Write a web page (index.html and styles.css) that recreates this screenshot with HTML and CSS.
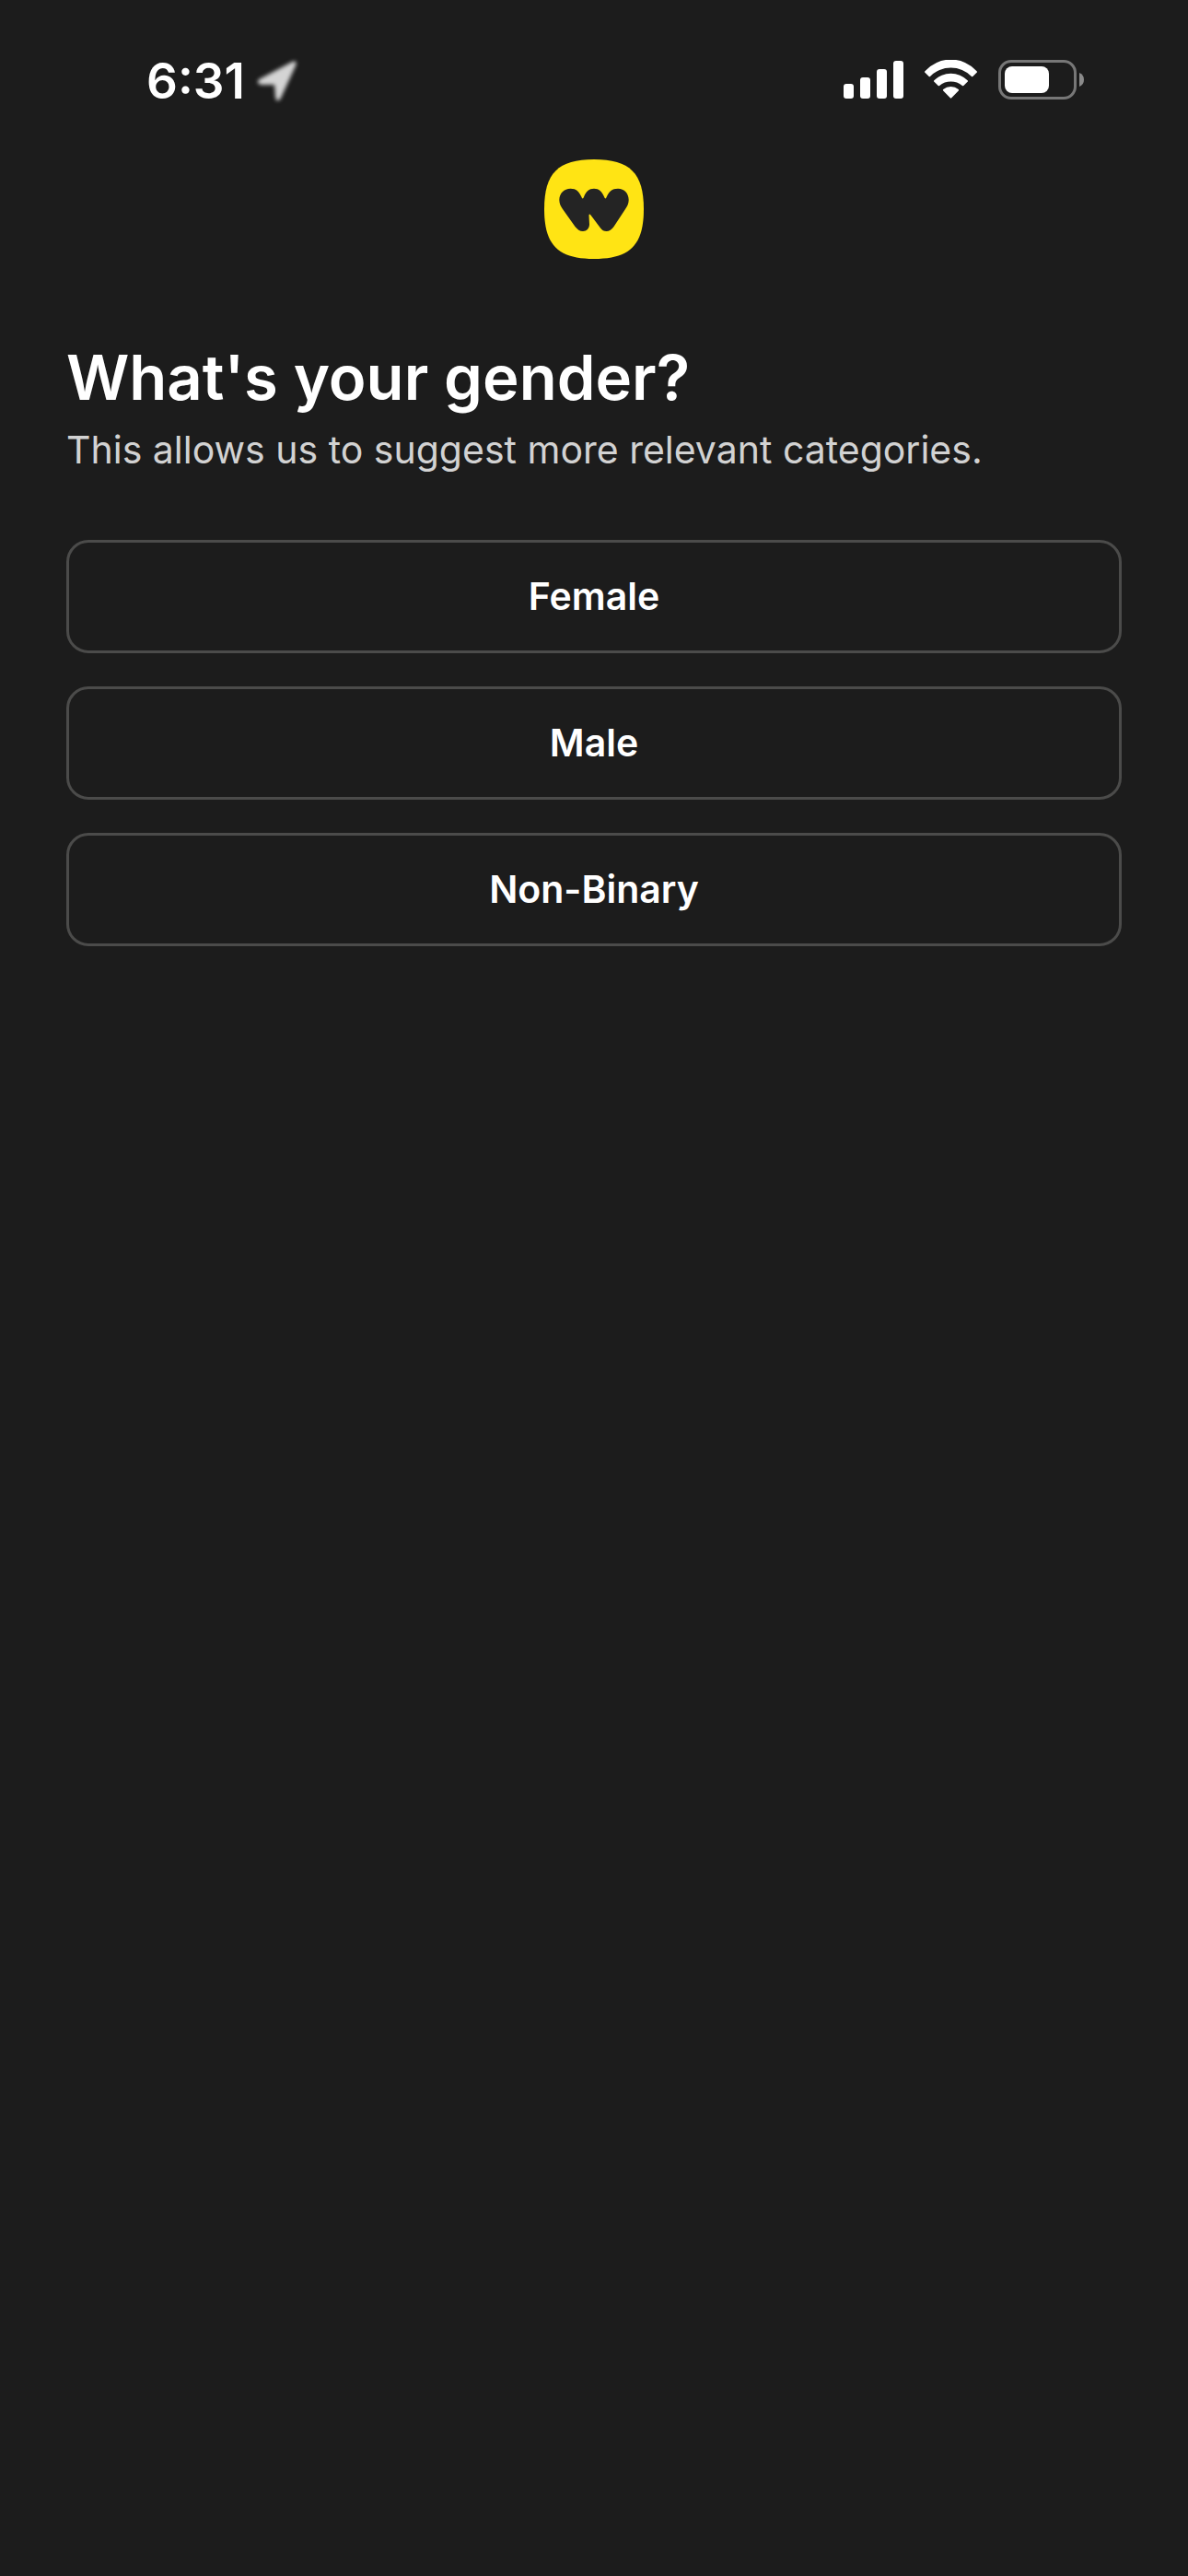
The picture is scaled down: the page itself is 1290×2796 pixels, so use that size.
FILE: index.html
```html
<!DOCTYPE html>
<html lang="en">
<head>
  <meta charset="utf-8">
  <meta name="viewport" content="width=device-width, initial-scale=1">
  <title>What's your gender?</title>
  <link rel="stylesheet" href="styles.css">
</head>
<body>
  <header class="status-bar">
    <div class="status-group status-time">
      <time>6:31</time>
      <svg class="location" width="54" height="56" viewBox="0 0 54 56" aria-hidden="true">
        <path d="M8 27 L44 8 Q48 6 46 11 L30 46 Q27 51 26 45 L25 31 L10 31 Q5 30 8 27 Z" fill="#d4d4d4" stroke="#d4d4d4" stroke-width="2" stroke-linejoin="round"/>
      </svg>
    </div>
    <div class="status-group status-icons">
      <svg width="66" height="44" viewBox="0 0 66 44" fill="#fff" aria-hidden="true">
        <rect x="0" y="26" width="11" height="16" rx="3"/>
        <rect x="18" y="19" width="11" height="23" rx="3"/>
        <rect x="36" y="10" width="11" height="32" rx="3"/>
        <rect x="54" y="1" width="11" height="41" rx="3"/>
      </svg>
      <svg width="58" height="44" viewBox="0 0 58 44" fill="#fff" aria-hidden="true">
        <path d="M.4 12.2A37.6 37.6 0 0 1 56.6 12.2Q57.4 13 56.6 13.8L52.3 18Q51.7 18.6 51 18A31.5 31.5 0 0 0 6 18Q5.300 18.600 4.700 18L.4 13.800Q-.4 13 .4 12.200Z"/>
        <path d="M10.400 22.300A25.400 25.400 0 0 1 46.600 22.300Q47.400 23 46.600 23.800L42.300 28Q41.600 28.600 40.900 28A19.400 19.400 0 0 0 16.100 28Q15.400 28.600 14.700 28L10.400 23.800Q9.600 23 10.400 22.300Z"/>
        <path d="M20.200 32A13 13 0 0 1 36.800 32Q37.600 32.800 36.800 33.600L29.200 41.300Q28.500 42 27.800 41.300L20.200 33.600Q19.400 32.800 20.200 32Z"/>
      </svg>
      <svg width="94" height="44" viewBox="0 0 94 44" aria-hidden="true">
        <rect x="1.500" y="1.500" width="82" height="40" rx="12.500" fill="none" stroke="#777" stroke-width="3"/>
        <rect x="7" y="7" width="48" height="29" rx="8" fill="#fff"/>
        <path d="M88 14Q93 16 93 21.500T88 29Z" fill="#8a8a8a"/>
      </svg>
    </div>
  </header>

  <main class="page">
    <svg class="logo" width="108" height="108" viewBox="0 0 108 108" role="img" aria-label="Logo">
      <path d="M54 0C93 0 108 15 108 54S93 108 54 108 0 93 0 54 15 0 54 0Z" fill="#ffe414"/>
      <path d="M28.500 31.700C35 31.700 37.500 35 40.300 40.500Q41.700 44.500 43.100 40.500C45.500 35 48.500 31.700 54 31.700C59.500 31.700 62.500 35 65 40.500Q66.400 44.500 67.800 40.500C70.500 35 73.500 31.700 80 31.700C87 31.700 91.700 37 91.700 44C91.700 48 90 51 88 54L75.500 73Q72 78 67.500 78Q63.500 78 61 74.500L50.500 60.500Q48.600 58.500 48.500 61L49 70.500C49 75 46 78 42 78C38.500 78 36 76 33.500 73L20 54C18 51 16.300 48 16.300 44C16.300 37 21.500 31.700 28.500 31.700Z" fill="#242424"/>
    </svg>

    <h1 class="title">What's your gender?</h1>
    <p class="subtitle">This allows us to suggest more relevant categories.</p>

    <div class="options">
      <button class="option" type="button">Female</button>
      <button class="option" type="button">Male</button>
      <button class="option" type="button">Non-Binary</button>
    </div>
  </main>
</body>
</html>
```
FILE: styles.css
```css
* {
  box-sizing: border-box;
}

body {
  margin: 0;
  min-height: 100vh;
  background: #1c1c1c;
  color: #fff;
  font-family: Inter, "Liberation Sans", sans-serif;
}

.status-bar {
  display: flex;
  justify-content: space-between;
  align-items: center;
  height: 173px;
  padding: 0 112px 0 159px;
}

.status-group {
  display: flex;
  align-items: center;
}

.status-time {
  gap: 8px;
  padding-top: 3px;
  font-size: 53px;
  font-weight: 600;
  line-height: 64px;
}

.status-icons {
  gap: 22px;
}

.location {
  filter: blur(2px);
}

.page {
  display: flex;
  flex-direction: column;
  padding: 0 72px 72px;
}

.logo {
  align-self: center;
}

.title {
  margin: 84px 0 0;
  font-size: 67px;
  font-weight: 600;
  line-height: 89px;
}

.subtitle {
  margin: 8px 0 0;
  color: #d2d2d2;
  font-size: 41px;
  line-height: 52px;
}

.options {
  display: flex;
  flex-direction: column;
  gap: 36px;
  margin-top: 72px;
}

.option {
  width: 100%;
  padding: 32px;
  border: 3px solid #4b4b4a;
  border-radius: 24px;
  background: transparent;
  color: #fff;
  font-family: inherit;
  font-size: 41px;
  font-weight: 600;
  line-height: 53px;
}
```
